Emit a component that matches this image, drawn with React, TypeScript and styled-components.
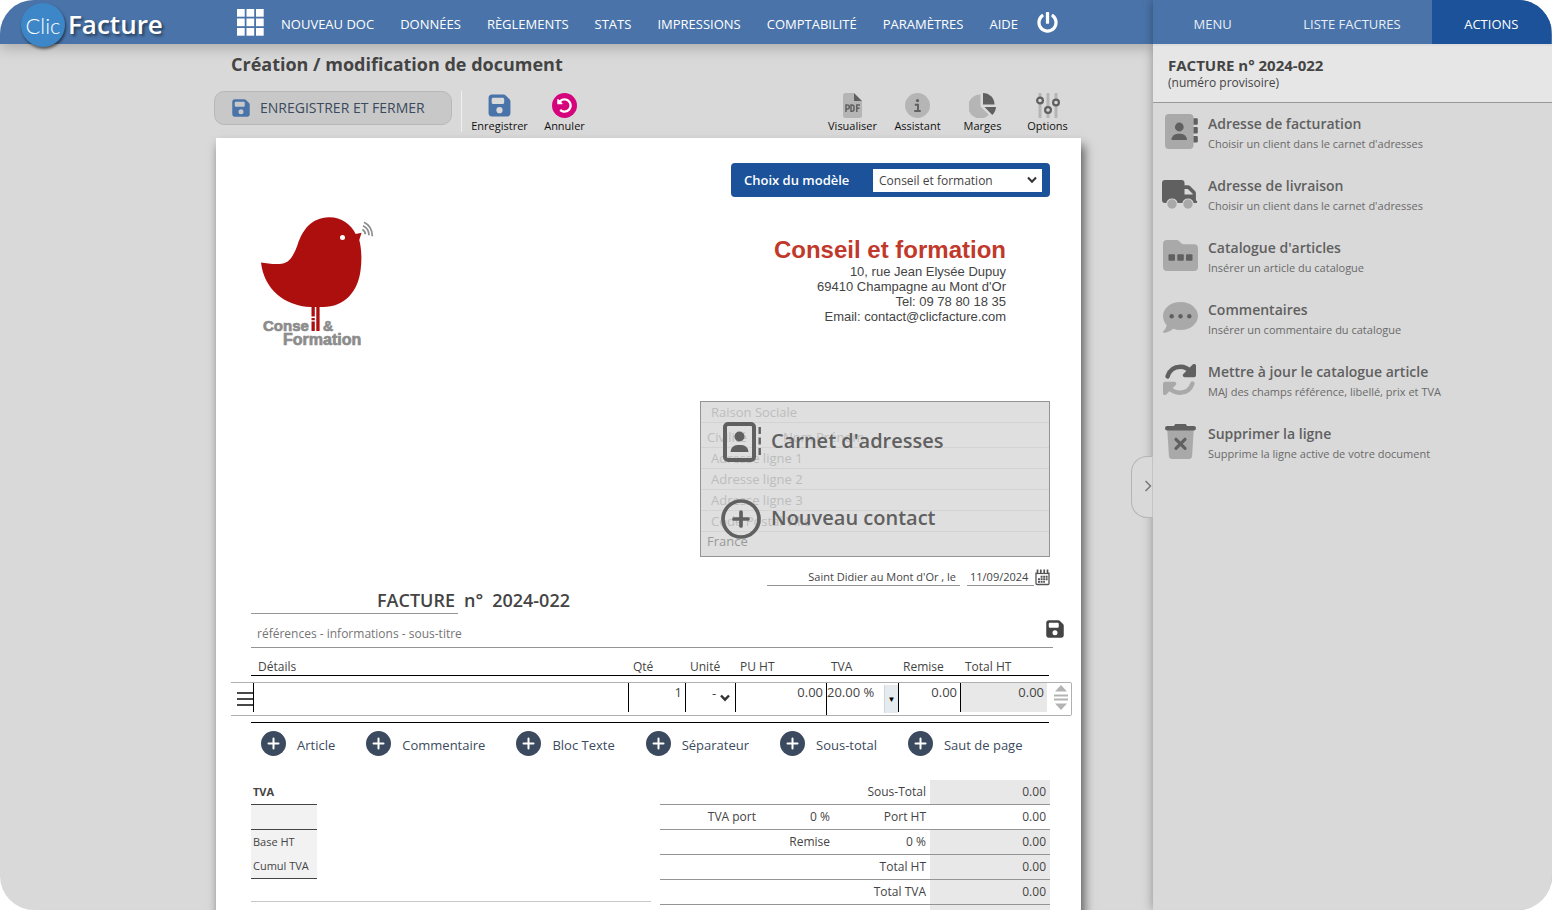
import React from "react";
import styled, { createGlobalStyle } from "styled-components";
import { FaFloppyDisk } from "react-icons/fa6";
import { FaPowerOff, FaUndoAlt } from "react-icons/fa";

const color = {
  bar: "#4a74a9",
  strong: "#1b5299",
  page: "#d9d9d9",
  text: "#444444",
  icon: "#606060",
  iconSoft: "#a9a9a9",
  slate: "#3b4a5e",
  line: "#949494",
  fill: "#e8e8e8",
};

const GlobalStyle = createGlobalStyle`
  *, *::before, *::after { box-sizing: border-box; }
  body { margin: 0; background: #fff; color: ${color.text}; font-family: "Open Sans", "Noto Sans", sans-serif; font-size: 13px; }
  button, input, select { font: inherit; color: inherit; margin: 0; padding: 0; border: 0; background: none; border-radius: 0; min-width: 0; }
  button { cursor: pointer; }
  h1, h2, p, ul { margin: 0; padding: 0; }
  ul { list-style: none; }
  svg { display: block; flex: none; }
`;

const Shell = styled.div`
  display: flex;
  height: 100vh;
  overflow: hidden;
  border-radius: 34px;
  background: ${color.page};
`;

const Workspace = styled.div`
  flex: 1;
  min-width: 0;
  display: flex;
  flex-direction: column;
`;

const TopBar = styled.header`
  position: relative;
  z-index: 1;
  display: flex;
  align-items: center;
  height: 44px;
  flex: none;
  padding-left: 21px;
  background: ${color.bar};
  box-shadow: 0 4px 14px rgba(0, 0, 0, 0.22);
`;

const Brand = styled.a`
  display: flex;
  align-items: center;
  gap: 3px;
  width: 216px;
  flex: none;
  color: #fff;
  text-decoration: none;
`;

const BrandDisc = styled.span`
  display: flex;
  align-items: center;
  justify-content: center;
  width: 44px;
  height: 44px;
  flex: none;
  margin-top: 6px;
  border-radius: 50%;
  background: #3d86c8;
  box-shadow: 1px 2px 3px rgba(0, 0, 0, 0.55);
  font-family: Lato, sans-serif;
  font-size: 22px;
  font-weight: 300;
`;

const BrandName = styled.span`
  margin-top: 4px;
  font-size: 26px;
  font-weight: 600;
  line-height: 30px;
  text-shadow: 2px 2px 3px rgba(0, 0, 0, 0.5);
`;

const Nav = styled.nav`
  display: flex;
  align-items: center;
  gap: 26px;
  margin-left: 17px;
  white-space: nowrap;
`;

const NavLink = styled.a`
  color: #fff;
  font-size: 13px;
  line-height: 20px;
  margin-top: 4px;
  text-decoration: none;
`;

const IconButton = styled.button`
  display: flex;
  color: #fff;
`;

const PowerButton = styled(IconButton)`
  margin-left: 19px;
`;

const Main = styled.main`
  flex: 1;
  min-height: 0;
  overflow: auto;
  scrollbar-width: none;
  padding: 8px 72px 0 214px;
`;

const PageTitle = styled.h1`
  padding-left: 17px;
  font-size: 18px;
  font-weight: 700;
  line-height: 24px;
`;

const Toolbar = styled.div`
  display: flex;
  height: 47px;
  margin-top: 15px;
`;

const SaveCloseButton = styled.button`
  display: flex;
  align-items: center;
  gap: 9px;
  width: 238px;
  height: 34px;
  padding-left: 16px;
  border: 1px solid #b8b8b8;
  border-radius: 10px;
  background: #c8c8c8;
  color: ${color.slate};
  font-size: 14px;
  line-height: 18px;
`;

const ToolGroup = styled.div<{ $divided?: boolean }>`
  display: flex;
  height: 41px;
  margin-left: ${(p) => (p.$divided ? "9px" : "auto")};
  margin-right: ${(p) => (p.$divided ? "0" : "1px")};
  padding-left: 5px;
  border-left: 1px solid ${(p) => (p.$divided ? "#f0f0f0" : "transparent")};
`;

const ToolButton = styled.button`
  display: flex;
  flex-direction: column;
  align-items: center;
  width: 65px;
  color: #111;
  font-size: 11px;
  line-height: 15px;
`;

const ToolGlyph = styled.span`
  display: flex;
  align-items: center;
  justify-content: center;
  height: 25px;
  margin-top: 2px;
`;

const UndoDisc = styled.span`
  display: flex;
  align-items: center;
  justify-content: center;
  width: 25px;
  height: 25px;
  border-radius: 50%;
  background: #d5047c;
  color: #fff;
`;

const Paper = styled.section`
  display: flex;
  flex-direction: column;
  min-height: 1100px;
  margin-left: 2px;
  padding: 25px 31px 0 35px;
  background: #fff;
  box-shadow: 3px 7px 10px rgba(0, 0, 0, 0.6);
`;

const ModelBar = styled.label`
  display: flex;
  align-items: center;
  justify-content: space-between;
  align-self: flex-end;
  width: 319px;
  height: 34px;
  padding: 0 8px 0 13px;
  border-radius: 4px;
  background: ${color.strong};
  color: #fff;
  font-weight: 600;
`;

const SelectWrap = styled.span`
  position: relative;
  display: flex;
`;

const SelectArrow = styled.svg`
  position: absolute;
  right: 5px;
  top: 50%;
  margin-top: -4px;
  pointer-events: none;
`;

const ModelSelect = styled.select`
  appearance: none;
  width: 169px;
  height: 23px;
  padding: 0 20px 0 6px;
  background: #fff;
  color: ${color.text};
  font-size: 12px;
  font-weight: 400;
`;

const Letterhead = styled.div`
  display: flex;
  justify-content: space-between;
  align-items: flex-start;
  min-height: 132px;
  margin: 19px 44px 53px 9px;
`;

const Company = styled.address`
  padding-top: 20px;
  text-align: right;
  font-family: "Liberation Sans", Arial, sans-serif;
  font-style: normal;
  font-size: 13px;
  line-height: 15px;
`;

const CompanyName = styled.h2`
  color: #c0392b;
  font-size: 24px;
  line-height: 28px;
`;

const AddressBox = styled.div`
  position: relative;
  align-self: flex-end;
  width: 350px;
  height: 156px;
  border: 1px solid ${color.line};
  background: #dfdfdf;
`;

const AddressRow = styled.div<{ $height?: number; $indent?: number; $last?: boolean }>`
  display: flex;
  align-items: flex-end;
  height: ${(p) => p.$height ?? 21}px;
  padding-left: ${(p) => p.$indent ?? 10}px;
  border-bottom: ${(p) => (p.$last ? "0" : "1px solid #d3d3d3")};
`;

const AddressInput = styled.input<{ $width?: number }>`
  width: ${(p) => (p.$width ? p.$width + "px" : "100%")};
  height: 20px;
  color: #999;
  &::placeholder {
    color: #bdbdbd;
    opacity: 1;
  }
`;

const AddressActions = styled.div`
  position: absolute;
  inset: 0;
  display: flex;
  flex-direction: column;
  gap: 37px;
  padding: 20px 0 0 20px;
`;

const AddressAction = styled.button`
  display: flex;
  align-items: center;
  gap: 10px;
  height: 40px;
  color: ${color.icon};
  font-size: 20px;
  font-weight: 600;
  line-height: 28px;
`;

const AddressActionLabel = styled.span`
  padding-bottom: 2px;
`;

const DateRow = styled.div`
  display: flex;
  justify-content: flex-end;
  align-items: flex-start;
  height: 19px;
  margin-top: 10px;
`;

const LineInput = styled.input<{ $width: number; $align?: string }>`
  width: ${(p) => p.$width}px;
  height: 19px;
  padding: 0 4px;
  border-bottom: 1px solid ${color.line};
  font-size: 11px;
  text-align: ${(p) => p.$align ?? "left"};
`;

const DateInput = styled(LineInput)`
  margin-left: 7px;
  padding: 0 3px;
`;

const CalendarButton = styled.button`
  display: flex;
  margin: 2px 0 0 1px;
`;

const DocTitleRow = styled.div`
  display: flex;
  gap: 6px;
  margin-top: 2px;
  font-size: 18px;
  font-weight: 600;
  line-height: 24px;
`;

const DocTypeInput = styled.input`
  width: 207px;
  height: 26px;
  padding: 0 3px 2px 0;
  border-bottom: 1px solid ${color.line};
  text-align: right;
`;

const DocNumber = styled.span`
  padding-left: 3px;
`;

const ReferenceRow = styled.div`
  position: relative;
  margin: 6px -15px 0 0;
`;

const ReferenceInput = styled.input`
  width: calc(100% - 12px);
  height: 28px;
  padding-left: 6px;
  border-bottom: 1px solid ${color.line};
  font-size: 12px;
  &::placeholder {
    color: #757575;
    opacity: 1;
  }
`;

const ReferenceSave = styled.button`
  position: absolute;
  top: -1px;
  right: 0;
  display: flex;
`;

const LineTable = styled.table`
  width: calc(100% + 42px);
  margin: 0 -22px 0 -20px;
  table-layout: fixed;
  border-collapse: separate;
  border-spacing: 0;
`;

const HeadRow = styled.tr`
  background: linear-gradient(#000, #000) 20px 27px / calc(100% - 43px) 1px no-repeat;
`;

const HeadCell = styled.th`
  height: 34px;
  padding: 9px 0 0 5px;
  vertical-align: top;
  text-align: left;
  font-size: 12px;
  font-weight: 400;
  line-height: 20px;
`;

const LineCell = styled.td`
  height: 34px;
  padding: 0;
  vertical-align: top;
  border: solid #b0b0b0;
  border-width: 1px 0;
  &:last-child {
    border-right-width: 1px;
    border-radius: 0 2px 2px 0;
  }
`;

const CellBox = styled.div<{ $fill?: boolean; $tall?: boolean }>`
  position: relative;
  display: flex;
  height: ${(p) => (p.$tall ? 32 : 29)}px;
  border-left: 1px solid #000;
  background: ${(p) => (p.$fill ? color.fill : "transparent")};
`;

const CellInput = styled.input<{ $left?: boolean }>`
  width: 100%;
  height: 18px;
  padding-right: ${(p) => (p.$left ? 0 : 3)}px;
  text-align: ${(p) => (p.$left ? "left" : "right")};
`;

const UnitSelect = styled.select`
  appearance: none;
  width: 100%;
  height: 20px;
  padding-left: 26px;
`;

const RateButton = styled.button`
  width: 14px;
  height: 28px;
  flex: none;
  margin-top: 2px;
  border-left: 1px solid #cfd6db;
  background: #e5ebef;
  color: #000;
  font-size: 8px;
  line-height: 26px;
`;

const HandleButton = styled.button<{ $left: number; $top: number }>`
  display: flex;
  margin: ${(p) => p.$top}px 0 0 ${(p) => p.$left}px;
`;

const TableRule = styled.hr`
  width: calc(100% - 1px);
  height: 1px;
  margin: 6px 0 0;
  border: 0;
  background: #000;
`;

const AddBar = styled.div`
  display: flex;
  gap: 31px;
  margin: 8px 0 0 10px;
  white-space: nowrap;
`;

const AddButton = styled.button`
  display: flex;
  align-items: center;
  gap: 11px;
  height: 25px;
  color: ${color.slate};
  line-height: 20px;
`;

const AddLabel = styled.span`
  padding-top: 3px;
`;

const Summary = styled.div`
  display: flex;
  justify-content: space-between;
  margin-top: 24px;
`;

const SummaryLeft = styled.div`
  width: 400px;
  border-bottom: 1px solid #c8c8c8;
  height: 122px;
`;

const VatTable = styled.table`
  width: 66px;
  border-collapse: separate;
  border-spacing: 0;
  font-size: 11px;
  line-height: 15px;
  white-space: nowrap;
`;

const VatCell = styled.td<{ $line?: boolean }>`
  height: ${(p) => (p.$line ? 25 : 24)}px;
  padding: 0 0 1px 2px;
  background: #f2f2f2;
  border-bottom: ${(p) => (p.$line ? "1px solid #444" : "0")};
`;

const VatHead = styled.th`
  height: 25px;
  padding: 0 0 2px 2px;
  text-align: left;
  font-weight: 700;
  border-bottom: 1px solid #444;
`;

const TotalTable = styled.table`
  width: 390px;
  table-layout: fixed;
  border-collapse: separate;
  border-spacing: 0;
  font-size: 12px;
  line-height: 16px;
`;

const TotalCell = styled.td<{ $fill?: boolean }>`
  height: 25px;
  padding: 0 4px 0 0;
  text-align: right;
  border-bottom: 1px solid ${color.line};
  background: ${(p) => (p.$fill ? color.fill : "transparent")};
`;

const Side = styled.aside`
  position: relative;
  z-index: 2;
  width: 399px;
  flex: none;
  background: ${color.page};
  box-shadow: 0 0 10px rgba(0, 0, 0, 0.35);
`;

const Tabs = styled.nav`
  display: flex;
  height: 44px;
  padding-right: 1px;
  background: ${color.bar};
`;

const Tab = styled.a<{ $grow: number; $active?: boolean }>`
  flex: ${(p) => p.$grow} 0 0;
  padding-top: 4px;
  text-align: center;
  color: ${(p) => (p.$active ? "#fff" : "#e8eef6")};
  background: ${(p) => (p.$active ? color.strong : "transparent")};
  line-height: 40px;
  text-decoration: none;
`;

const SideHead = styled.div`
  height: 59px;
  padding: 10px 15px 0;
  border-top: 2px solid #dddddd;
  border-bottom: 1px solid #999;
  background: #e6e6e6;
  font-size: 12px;
  line-height: 18px;
`;

const SideTitle = styled.h2`
  font-size: 15px;
  font-weight: 700;
  line-height: 18px;
`;

const ActionItem = styled.button`
  display: flex;
  align-items: center;
  gap: 10px;
  width: 100%;
  height: 62px;
  padding-left: 9px;
  text-align: left;
  color: ${color.icon};
`;

const ActionGlyph = styled.span`
  display: flex;
  align-items: center;
  justify-content: center;
  width: 36px;
  height: 36px;
  margin-bottom: 5px;
`;

const ActionText = styled.span`
  display: flex;
  flex-direction: column;
  font-size: 11px;
  line-height: 20px;
  color: #6a6a6a;
`;

const ActionName = styled.span`
  font-size: 14px;
  font-weight: 600;
  color: ${color.icon};
`;

const SideToggle = styled.button`
  position: absolute;
  left: -22px;
  top: 456px;
  display: flex;
  align-items: center;
  justify-content: flex-end;
  width: 22px;
  height: 62px;
  padding: 0 0 2px;
  border: 1px solid #b5b5b5;
  border-right: 1px solid #c4c4c4;
  border-radius: 16px 0 0 16px;
  background: ${color.page};
`;

const GridIcon = () => (
  <svg width="27" height="27" viewBox="0 0 27 27" fill="#fff">
    {[0, 9.5, 19].map((y) => [0, 9.5, 19].map((x) => <rect key={x + "-" + y} x={x} y={y} width="7.7" height="7.7" />))}
  </svg>
);

const ChevronDown = ({ inset }: { inset?: boolean }) => (
  <SelectArrow width="10" height="8" viewBox="0 0 10 8" fill="none" stroke="#333" strokeWidth={inset ? 2.4 : 2}>
    <path d="M1 1.5 5 5.7 9 1.5" />
  </SelectArrow>
);

const PdfIcon = () => (
  <svg width="19" height="25" viewBox="0 0 19 25">
    <path d="M2.500 0H11v8h8v14.500a2.500 2.500 0 0 1-2.500 2.500h-14A2.500 2.500 0 0 1 0 22.500v-20A2.500 2.500 0 0 1 2.500 0Z" fill="#b5b5b5" />
    <path d="M11 0l8 8h-8Z" fill={color.icon} />
    <g fill="none" stroke={color.icon} strokeWidth="1.500">
      <path d="M3 19v-7h1.300a1.900 1.900 0 0 1 0 4H3M8 12.100h1a2 2 0 0 1 2 2v2.100a2 2 0 0 1-2 2H8ZM13.800 19v-7H17M13.800 15.300h2.700" />
    </g>
  </svg>
);

const InfoIcon = () => (
  <svg width="25" height="25" viewBox="0 0 25 25">
    <circle cx="12.500" cy="12.500" r="12.500" fill="#b5b5b5" />
    <circle cx="12.500" cy="7.600" r="1.600" fill={color.icon} />
    <path d="M9.800 11.700h3.200v6.300M9.300 18h6.400" fill="none" stroke={color.icon} strokeWidth="1.900" />
  </svg>
);

const PieIcon = () => (
  <svg width="27" height="25" viewBox="0 0 27 25">
    <path d="M11.500 1.500v12l8.300 8.300A12 12 0 1 1 11.500 1.500Z" fill="#b5b5b5" />
    <path d="M14 0a11.500 11.500 0 0 1 11.500 11.500H14Z" fill={color.icon} />
    <path d="M15.500 14H27a12 12 0 0 1-3.700 8Z" fill={color.icon} />
  </svg>
);

const SlidersIcon = () => (
  <svg width="24" height="25" viewBox="0 0 24 25">
    <path d="M4 1v23M12 1v23M20 1v23" stroke="#b5b5b5" strokeWidth="3" strokeLinecap="round" />
    <g fill={color.page} stroke={color.icon} strokeWidth="2.200">
      <circle cx="4" cy="7.500" r="2.900" />
      <circle cx="12" cy="17" r="2.900" />
      <circle cx="20" cy="9.500" r="2.900" />
    </g>
  </svg>
);

const BirdLogo = () => (
  <svg width="115" height="132" viewBox="0 0 115 132" role="img" aria-label="Conseil & Formation">
    <path
      d="M1 46.500C8 47.800 17 48.600 23 47.500C30 46.200 34 38.500 37.500 29C43 13 51 2 69 1.200C81 1 91 8 95.700 18L101.500 16.800L99.300 24C101.500 33 102 43 100.600 54C98 76 84 91.500 62 91H51C24 90 4 73 1 46.500Z"
      fill="#ad0f0f"
    />
    <circle cx="82.500" cy="21.500" r="2.500" fill="#fff" />
    <g fill="none" stroke="#8c8c8c" strokeWidth="1.700">
      <path d="M102.300 13.500q3 1.500 3 4.800" />
      <path d="M103 9.800q5.800 2.500 6 9.500" />
      <path d="M104 6.300q8.300 4 8.300 14" />
    </g>
    <path d="M51.500 91h3.300v9.500h-3.300ZM51.500 102h3.300v2.300h-3.300ZM51.500 105.500h3.300V115h-3.300ZM56.300 91h3.300v24h-3.300Z" fill="#ad0f0f" />
    <g fill="#8c8c8c" stroke="#8c8c8c" strokeWidth="0.700" fontFamily="Liberation Sans, Arial, sans-serif" fontWeight="700">
      <text x="3" y="115" fontSize="15">Conse</text>
      <text x="63" y="115" fontSize="14">&amp;</text>
      <text x="23" y="129" fontSize="16">Formation</text>
    </g>
  </svg>
);

const ContactBookIcon = () => (
  <svg width="40" height="40" viewBox="0 0 40 40">
    <rect x="4" y="2" width="29" height="36" rx="3" fill="none" stroke={color.icon} strokeWidth="4" />
    <circle cx="18.500" cy="14.500" r="5" fill={color.icon} />
    <path d="M9.500 30a7 7 0 0 1 7-7h4a7 7 0 0 1 7 7Z" fill={color.icon} />
    <path d="M38.700 5v7M38.700 15.500v7M38.700 26v7" stroke={color.icon} strokeWidth="2.400" />
  </svg>
);

const CirclePlusIcon = () => (
  <svg width="40" height="40" viewBox="0 0 40 40" fill="none" stroke={color.icon} strokeWidth="3.700" strokeLinecap="round">
    <circle cx="20" cy="20" r="18" />
    <path d="M20 13v14M13 20h14" />
  </svg>
);

const CalendarIcon = () => (
  <svg width="15" height="17" viewBox="0 0 15 17" fill="none" stroke="#555">
    <path d="M1 3.500V14.500a1 1 0 0 0 1 1H13a1 1 0 0 0 1-1V3.500" strokeWidth="1.300" />
    <path d="M1 4.500h13" strokeWidth="1.200" />
    <path d="M2.500 .5v3.500M5.800 .5v3.500M9.200 .5v3.500M12.500 .5v3.500" strokeWidth="1.700" />
    <path d="M5.600 7.700h7M3 10.300h9.600M3 12.900h7" strokeWidth="1.900" strokeDasharray="2 0.600" />
  </svg>
);

const BurgerIcon = () => (
  <svg width="16" height="16" viewBox="0 0 16 16" stroke="#484848" strokeWidth="2">
    <path d="M0 2h16M0 8h16M0 14h16" />
  </svg>
);

const MoveIcon = () => (
  <svg width="14" height="25" viewBox="0 0 14 25" fill="#b3b3b3">
    <path d="M7 0l6 6.500H1ZM0 9.500h14v2H0ZM0 13.500h14v2H0ZM7 25l6-6.500H1Z" />
  </svg>
);

const PlusDisc = () => (
  <svg width="25" height="25" viewBox="0 0 25 25">
    <circle cx="12.500" cy="12.500" r="12.500" fill={color.slate} />
    <path d="M12.500 7.500v10M7.500 12.500h10" stroke="#fff" strokeWidth="2" strokeLinecap="round" />
  </svg>
);

const AddressBookIcon = () => (
  <svg width="35" height="35" viewBox="-2 0 35 35">
    <rect width="28.500" height="35" rx="4" fill={color.iconSoft} />
    <circle cx="14.300" cy="13" r="4.400" fill={color.icon} />
    <path d="M6.500 26a6.200 6.200 0 0 1 6.200-6.200h3a6.200 6.200 0 0 1 6.200 6.200Z" fill={color.icon} />
    <path d="M28.500 4.300h3.300a1 1 0 0 1 1 1v4.400a1 1 0 0 1-1 1h-3.300ZM28.500 13.100h3.300a1 1 0 0 1 1 1v4.400a1 1 0 0 1-1 1h-3.300ZM28.500 22h3.300a1 1 0 0 1 1 1v4.400a1 1 0 0 1-1 1h-3.300Z" fill={color.icon} />
  </svg>
);

const TruckIcon = () => (
  <svg width="36" height="30" viewBox="0 0 36 30">
    <path
      d="M3 1H19.500a3 3 0 0 1 3 3V6.200h3.300a3 3 0 0 1 2.200.9l5 5a3 3 0 0 1 .9 2.200V21.500a1.400 1.400 0 0 1 .6 2.600H31.600a5.700 5.700 0 0 0-11.200 0H15.600a5.700 5.700 0 0 0-11.200 0H3a3 3 0 0 1-3-3V4a3 3 0 0 1 3-3ZM22.500 10v5.600h8.200v-.8L25.800 10Z"
      fill={color.icon}
      fillRule="evenodd"
    />
    <circle cx="10" cy="25" r="4.700" fill={color.iconSoft} />
    <circle cx="26" cy="25" r="4.700" fill={color.iconSoft} />
  </svg>
);

const FolderIcon = () => (
  <svg width="35" height="31" viewBox="0 0 35 31">
    <path d="M4 0h9.500a4 4 0 0 1 2.800 1.200L18 3a3.500 3.500 0 0 0 2.500 1.200H31a4 4 0 0 1 4 4V27a4 4 0 0 1-4 4H4a4 4 0 0 1-4-4V4a4 4 0 0 1 4-4Z" fill={color.iconSoft} />
    {[5.500, 14.300, 23].map((x) => (
      <rect key={x} x={x} y="14.200" width="6.500" height="6.500" rx="1" fill={color.icon} />
    ))}
  </svg>
);

const CommentIcon = () => (
  <svg width="35" height="31" viewBox="0 0 35 31">
    <path d="M17.500 0C27.200 0 35 6.200 35 14s-7.800 14-17.500 14c-2.600 0-5-.4-7.200-1.200C7.800 28.600 4.300 30.800.8 30.800a.8.800 0 0 1-.5-1.500C1.600 27.900 3.300 25.500 3.700 23.200 1.400 20.700 0 17.500 0 14 0 6.200 7.800 0 17.500 0Z" fill={color.iconSoft} />
    {[8.700, 17.500, 26.300].map((x) => (
      <circle key={x} cx={x} cy="14.300" r="2.200" fill={color.icon} />
    ))}
  </svg>
);

const RefreshIcon = () => (
  <svg width="34" height="31" viewBox="0 0 34 31">
    <path d="M4.500 12.500C6.500 6.300 11 2.700 17.500 2.700c5 0 8 2.300 10.800 5.300" fill="none" stroke={color.icon} strokeWidth="4.400" strokeLinecap="round" />
    <path d="M33 1.800v9.400a2 2 0 0 1-2 2h-9.300c-1.800 0-2.600-2-1.400-3.300L29.700.4C31-.6 33 0 33 1.800Z" fill={color.icon} />
    <path d="M29.500 19.500C27.500 25.500 23 28.700 17 28.700c-5 0-8.500-2-11-5" fill="none" stroke={color.iconSoft} strokeWidth="4.400" strokeLinecap="round" />
    <path d="M0 29.200v-9.400a2 2 0 0 1 2-2h9.300c1.800 0 2.600 2 1.400 3.300L3.300 30.600C2 31.600 0 31 0 29.200Z" fill={color.iconSoft} />
  </svg>
);

const TrashIcon = () => (
  <svg width="31" height="35" viewBox="0 0 31 35">
    <path d="M2.300 6h26.400l-1.600 25.700a3.500 3.500 0 0 1-3.500 3.300H7.400a3.500 3.500 0 0 1-3.500-3.300Z" fill={color.iconSoft} />
    <path d="M10.200 0h10.600l1.200 2h6.800a2.200 2.200 0 0 1 0 4.400H2.200a2.200 2.200 0 0 1 0-4.400H9Z" fill={color.icon} />
    <path d="M11 15.300l9 9M20 15.300l-9 9" stroke={color.icon} strokeWidth="3.200" strokeLinecap="round" />
  </svg>
);

const menu = ["NOUVEAU DOC", "DONNÉES", "RÈGLEMENTS", "STATS", "IMPRESSIONS", "COMPTABILITÉ", "PARAMÈTRES", "AIDE"];

const viewTools = [
  { label: "Visualiser", icon: <PdfIcon /> },
  { label: "Assistant", icon: <InfoIcon /> },
  { label: "Marges", icon: <PieIcon /> },
  { label: "Options", icon: <SlidersIcon /> },
];

const addItems = ["Article", "Commentaire", "Bloc Texte", "Séparateur", "Sous-total", "Saut de page"];

const actions = [
  { name: "Adresse de facturation", hint: "Choisir un client dans le carnet d'adresses", icon: <AddressBookIcon /> },
  { name: "Adresse de livraison", hint: "Choisir un client dans le carnet d'adresses", icon: <TruckIcon /> },
  { name: "Catalogue d'articles", hint: "Insérer un article du catalogue", icon: <FolderIcon /> },
  { name: "Commentaires", hint: "Insérer un commentaire du catalogue", icon: <CommentIcon /> },
  { name: "Mettre à jour le catalogue article", hint: "MAJ des champs référence, libellé, prix et TVA", icon: <RefreshIcon /> },
  { name: "Supprimer la ligne", hint: "Supprime la ligne active de votre document", icon: <TrashIcon /> },
];

const columns = ["Détails", "Qté", "Unité", "PU HT", "TVA", "Remise", "Total HT"];
const columnWidths = [22, undefined, 57, 50, 91, 72, 62, 87, 25];

const totals = [
  { cells: ["", "", "Sous-Total"], fill: true },
  { cells: ["TVA port", "0 %", "Port HT"], fill: false },
  { cells: ["", "Remise", "0 %"], fill: true },
  { cells: ["", "", "Total HT"], fill: true },
  { cells: ["", "", "Total TVA"], fill: true },
];

function InvoiceLines() {
  return (
    <LineTable>
      <colgroup>
        {columnWidths.map((w, i) => (
          <col key={i} width={w} />
        ))}
      </colgroup>
      <thead>
        <HeadRow>
          <HeadCell />
          {columns.map((c) => (
            <HeadCell key={c} scope="col">{c}</HeadCell>
          ))}
          <HeadCell />
        </HeadRow>
      </thead>
      <tbody>
        <tr>
          <LineCell>
            <HandleButton $left={6} $top={8} aria-label="Menu de la ligne"><BurgerIcon /></HandleButton>
          </LineCell>
          <LineCell><CellBox><CellInput $left aria-label="Détails" /></CellBox></LineCell>
          <LineCell><CellBox><CellInput aria-label="Quantité" defaultValue="1" /></CellBox></LineCell>
          <LineCell>
            <CellBox>
              <UnitSelect aria-label="Unité"><option>-</option></UnitSelect>
              <ChevronDown inset />
            </CellBox>
          </LineCell>
          <LineCell><CellBox><CellInput aria-label="PU HT" defaultValue="0.00" /></CellBox></LineCell>
          <LineCell>
            <CellBox $tall>
              <CellInput $left aria-label="TVA" defaultValue="20.00 %" />
              <RateButton aria-label="Choisir un taux">▼</RateButton>
            </CellBox>
          </LineCell>
          <LineCell><CellBox><CellInput aria-label="Remise" defaultValue="0.00" /></CellBox></LineCell>
          <LineCell><CellBox $fill><CellInput aria-label="Total HT" defaultValue="0.00" readOnly /></CellBox></LineCell>
          <LineCell>
            <HandleButton $left={7} $top={2} aria-label="Déplacer la ligne"><MoveIcon /></HandleButton>
          </LineCell>
        </tr>
      </tbody>
    </LineTable>
  );
}

export default function App() {
  return (
    <>
      <GlobalStyle />
      <Shell>
        <Workspace>
          <TopBar>
            <Brand href="#">
              <BrandDisc>Clic</BrandDisc>
              <BrandName>Facture</BrandName>
            </Brand>
            <IconButton aria-label="Applications"><GridIcon /></IconButton>
            <Nav>
              {menu.map((m) => (
                <NavLink key={m} href="#">{m}</NavLink>
              ))}
            </Nav>
            <PowerButton aria-label="Déconnexion"><FaPowerOff size={21} /></PowerButton>
          </TopBar>
          <Main>
            <PageTitle>Création / modification de document</PageTitle>
            <Toolbar>
              <SaveCloseButton>
                <FaFloppyDisk size={20} color={color.bar} />
                ENREGISTRER ET FERMER
              </SaveCloseButton>
              <ToolGroup $divided>
                <ToolButton>
                  <ToolGlyph><FaFloppyDisk size={25} color={color.bar} /></ToolGlyph>
                  Enregistrer
                </ToolButton>
                <ToolButton>
                  <ToolGlyph><UndoDisc><FaUndoAlt size={15} /></UndoDisc></ToolGlyph>
                  Annuler
                </ToolButton>
              </ToolGroup>
              <ToolGroup>
                {viewTools.map((t) => (
                  <ToolButton key={t.label}>
                    <ToolGlyph>{t.icon}</ToolGlyph>
                    {t.label}
                  </ToolButton>
                ))}
              </ToolGroup>
            </Toolbar>
            <Paper>
              <ModelBar>
                Choix du modèle
                <SelectWrap>
                  <ModelSelect><option>Conseil et formation</option></ModelSelect>
                  <ChevronDown />
                </SelectWrap>
              </ModelBar>
              <Letterhead>
                <BirdLogo />
                <Company>
                  <CompanyName>Conseil et formation</CompanyName>
                  <p>10, rue Jean Elysée Dupuy</p>
                  <p>69410 Champagne au Mont d'Or</p>
                  <p>Tel: 09 78 80 18 35</p>
                  <p>Email: contact@clicfacture.com</p>
                </Company>
              </Letterhead>
              <AddressBox>
                <AddressRow><AddressInput aria-label="Raison Sociale" placeholder="Raison Sociale" /></AddressRow>
                <AddressRow $height={25} $indent={6}>
                  <AddressInput $width={76} aria-label="Civilité" placeholder="Civilité" />
                  <AddressInput $width={200} aria-label="Nom Prénom" placeholder="Nom Prénom" />
                </AddressRow>
                <AddressRow><AddressInput aria-label="Adresse ligne 1" placeholder="Adresse ligne 1" /></AddressRow>
                <AddressRow><AddressInput aria-label="Adresse ligne 2" placeholder="Adresse ligne 2" /></AddressRow>
                <AddressRow><AddressInput aria-label="Adresse ligne 3" placeholder="Adresse ligne 3" /></AddressRow>
                <AddressRow>
                  <AddressInput $width={75} aria-label="Code Postal" placeholder="Code Postal" />
                  <AddressInput $width={200} aria-label="Ville" placeholder="Ville" />
                </AddressRow>
                <AddressRow $height={19} $indent={6} $last><AddressInput aria-label="Pays" defaultValue="France" /></AddressRow>
                <AddressActions>
                  <AddressAction><ContactBookIcon /><AddressActionLabel>Carnet d'adresses</AddressActionLabel></AddressAction>
                  <AddressAction><CirclePlusIcon /><AddressActionLabel>Nouveau contact</AddressActionLabel></AddressAction>
                </AddressActions>
              </AddressBox>
              <DateRow>
                <LineInput $width={193} $align="right" aria-label="Lieu" defaultValue="Saint Didier au Mont d'Or , le" />
                <DateInput $width={67} aria-label="Date" defaultValue="11/09/2024" />
                <CalendarButton aria-label="Calendrier"><CalendarIcon /></CalendarButton>
              </DateRow>
              <DocTitleRow>
                <DocTypeInput aria-label="Type de document" defaultValue="FACTURE" />
                <span>n°</span>
                <DocNumber>2024-022</DocNumber>
              </DocTitleRow>
              <ReferenceRow>
                <ReferenceInput aria-label="Références" placeholder="références - informations - sous-titre" />
                <ReferenceSave aria-label="Enregistrer les références"><FaFloppyDisk size={20} /></ReferenceSave>
              </ReferenceRow>
              <InvoiceLines />
              <TableRule />
              <AddBar>
                {addItems.map((a) => (
                  <AddButton key={a}>
                    <PlusDisc />
                    <AddLabel>{a}</AddLabel>
                  </AddButton>
                ))}
              </AddBar>
              <Summary>
                <SummaryLeft>
                  <VatTable>
                    <thead><tr><VatHead scope="col">TVA</VatHead></tr></thead>
                    <tbody>
                      <tr><VatCell $line /></tr>
                      <tr><VatCell>Base HT</VatCell></tr>
                      <tr><VatCell $line>Cumul TVA</VatCell></tr>
                    </tbody>
                  </VatTable>
                </SummaryLeft>
                <TotalTable>
                  <colgroup>
                    <col width="100" />
                    <col width="74" />
                    <col width="96" />
                    <col width="120" />
                  </colgroup>
                  <tbody>
                    {totals.map((t) => (
                      <tr key={t.cells.join()}>
                        {t.cells.map((c, i) => (
                          <TotalCell key={i}>{c}</TotalCell>
                        ))}
                        <TotalCell $fill={t.fill}>0.00</TotalCell>
                      </tr>
                    ))}
                    <tr>
                      <TotalCell colSpan={3} />
                      <TotalCell $fill />
                    </tr>
                  </tbody>
                </TotalTable>
              </Summary>
            </Paper>
          </Main>
        </Workspace>
        <Side>
          <SideToggle aria-label="Replier le panneau">
            <svg width="8" height="12" viewBox="0 0 8 12" fill="none" stroke="#777" strokeWidth="1.500">
              <path d="M1.500 1l5 5-5 5" />
            </svg>
          </SideToggle>
          <Tabs>
            <Tab href="#" $grow={3}>MENU</Tab>
            <Tab href="#" $grow={4}>LISTE FACTURES</Tab>
            <Tab href="#" $grow={3} $active>ACTIONS</Tab>
          </Tabs>
          <SideHead>
            <SideTitle>FACTURE n° 2024-022</SideTitle>
            <p>(numéro provisoire)</p>
          </SideHead>
          <ul>
            {actions.map((a) => (
              <li key={a.name}>
                <ActionItem>
                  <ActionGlyph>{a.icon}</ActionGlyph>
                  <ActionText>
                    <ActionName>{a.name}</ActionName>
                    {a.hint}
                  </ActionText>
                </ActionItem>
              </li>
            ))}
          </ul>
        </Side>
      </Shell>
    </>
  );
}
